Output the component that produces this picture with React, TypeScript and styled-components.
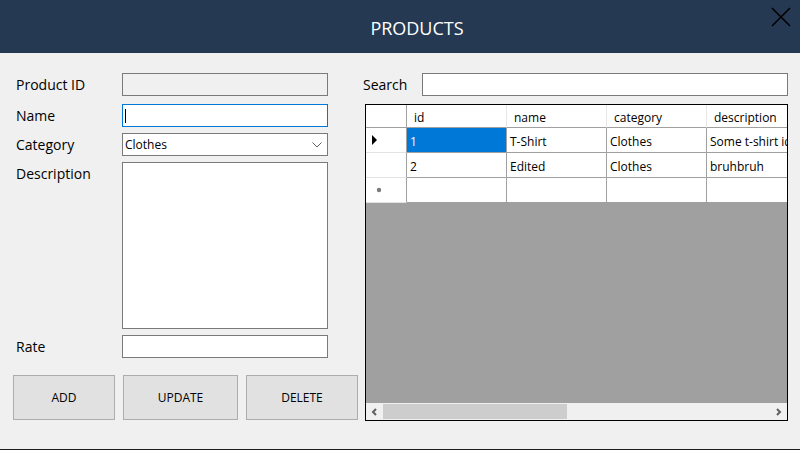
import React from 'react';
import styled, { createGlobalStyle } from 'styled-components';

const Global = createGlobalStyle`
  html, body { margin: 0; padding: 0; background: #f0f0f0; }
  body { font-family: "Open Sans", "Noto Sans", sans-serif; color: #000; }
  * { box-sizing: border-box; }
`;

const Window = styled.div`
  width: 800px;
  height: 450px;
  background: #f0f0f0;
  border-bottom: 1px solid #1c1c1c;
  display: flex;
  flex-direction: column;
  overflow: hidden;
`;

const TitleBar = styled.header`
  position: relative;
  flex: none;
  height: 53px;
  background: #253a52;
  display: flex;
  align-items: center;
  justify-content: center;
`;

const Title = styled.h1`
  margin: 0 0 0 34px;
  padding-top: 3px;
  font-size: 18px;
  font-weight: 400;
  color: #ffffff;
`;

const CloseButton = styled.button`
  position: absolute;
  top: 7px;
  right: 9px;
  width: 20px;
  height: 20px;
  padding: 0;
  border: none;
  background: transparent;
  display: flex;
`;

const Body = styled.main`
  flex: 1;
  display: flex;
  padding: 20px 12px 0 13px;
`;

const LeftPanel = styled.section`
  width: 345px;
  display: flex;
  flex-direction: column;
`;

const Form = styled.div`
  display: flex;
  flex-direction: column;
  padding-left: 3px;
`;

const FieldRow = styled.div<{ $mt: number }>`
  display: flex;
  align-items: flex-start;
  margin-top: ${p => p.$mt}px;
`;

const Label = styled.label<{ $w?: number }>`
  width: ${p => p.$w ?? 106}px;
  flex: none;
  height: 23px;
  line-height: 23px;
  font-size: 14px;
`;

const TextBox = styled.div<{ $h?: number; $w?: number; $disabled?: boolean; $focused?: boolean }>`
  width: ${p => p.$w ?? 206}px;
  height: ${p => p.$h ?? 23}px;
  border: 1px solid ${p => (p.$focused ? '#0078d7' : '#7a7a7a')};
  background: ${p => (p.$disabled ? '#f0f0f0' : '#ffffff')};
  display: flex;
  align-items: center;
  padding: 0 2px;
`;

const Caret = styled.span`
  display: block;
  width: 1px;
  height: 14px;
  background: #000;
`;

const Combo = styled.div`
  width: 206px;
  height: 23px;
  border: 1px solid #7a7a7a;
  background: #ffffff;
  display: flex;
  align-items: center;
  justify-content: space-between;
  padding: 0 5px 0 2px;
  font-size: 12px;
`;

const ButtonRow = styled.div`
  display: flex;
  gap: 8px;
  margin-top: 17px;
`;

const ActionButton = styled.button<{ $w: number }>`
  width: ${p => p.$w}px;
  height: 45px;
  background: #e1e1e1;
  border: 1px solid #adadad;
  font-family: "Open Sans", "Noto Sans", sans-serif;
  font-size: 12px;
  color: #000;
  padding: 0;
`;

const RightPanel = styled.section`
  width: 425px;
  margin-left: 5px;
  display: flex;
  flex-direction: column;
`;

const SearchRow = styled.div`
  display: flex;
  align-items: flex-start;
`;

const GridFrame = styled.div`
  margin: 8px 0 0 2px;
  width: 423px;
  height: 317px;
  border: 1px solid #000;
  background: #a0a0a0;
  display: flex;
  flex-direction: column;
  overflow: hidden;
`;

const GridTable = styled.div`
  display: grid;
  grid-template-columns: 41px 100px 100px 100px 120px;
  grid-template-rows: 23px 25px 25px 25px;
  background: #fff;
  width: 421px;
  overflow: hidden;
`;

const HeadCell = styled.div<{ $corner?: boolean }>`
  background: #fff;
  border-right: 1px solid ${p => (p.$corner ? '#a0a0a0' : '#e6e6e6')};
  border-bottom: 1px solid #a0a0a0;
  font-size: 12px;
  padding: 2px 0 0 7px;
  display: flex;
  align-items: center;
  white-space: nowrap;
`;

const RowHead = styled.div`
  background: #fff;
  border-right: 1px solid #a0a0a0;
  border-bottom: 1px solid #e3e3e3;
  display: flex;
  align-items: center;
  padding-left: 6px;
`;

const Cell = styled.div<{ $selected?: boolean }>`
  background: ${p => (p.$selected ? '#0078d7' : '#fff')};
  color: ${p => (p.$selected ? '#fff' : '#000')};
  border-right: 1px solid #a0a0a0;
  border-bottom: 1px solid #a0a0a0;
  font-size: 12px;
  padding: 2px 0 0 3px;
  display: flex;
  align-items: center;
  white-space: nowrap;
  overflow: hidden;
`;

const EmptyArea = styled.div`
  flex: 1;
  background: #a0a0a0;
`;

const HScroll = styled.div`
  flex: none;
  height: 17px;
  background: #f0f0f0;
  display: flex;
  align-items: center;
`;

const ScrollArrow = styled.div`
  width: 17px;
  height: 17px;
  display: flex;
  align-items: center;
  justify-content: center;
  flex: none;
`;

const ScrollTrack = styled.div`
  flex: 1;
  height: 15px;
  display: flex;
`;

const ScrollThumb = styled.div`
  width: 184px;
  height: 15px;
  background: #cdcdcd;
`;

const rows = [
  { id: '1', name: 'T-Shirt', category: 'Clothes', description: 'Some t-shirt idk' },
  { id: '2', name: 'Edited', category: 'Clothes', description: 'bruhbruh' },
];

export default function App() {
  return (
    <>
      <Global />
      <Window>
        <TitleBar>
          <Title>PRODUCTS</Title>
          <CloseButton aria-label="Close">
            <svg width="20" height="20" viewBox="0 0 20 20">
              <path d="M1 1 L19 19 M19 1 L1 19" stroke="#000" strokeWidth="1.6" fill="none" />
            </svg>
          </CloseButton>
        </TitleBar>
        <Body>
          <LeftPanel>
            <Form>
              <FieldRow $mt={0}>
                <Label>Product ID</Label>
                <TextBox $disabled />
              </FieldRow>
              <FieldRow $mt={8}>
                <Label>Name</Label>
                <TextBox $focused>
                  <Caret />
                </TextBox>
              </FieldRow>
              <FieldRow $mt={6}>
                <Label>Category</Label>
                <Combo>
                  <span>Clothes</span>
                  <svg width="10" height="6" viewBox="0 0 10 6">
                    <path d="M0.5 0.5 L5 5 L9.5 0.5" stroke="#606060" strokeWidth="1" fill="none" />
                  </svg>
                </Combo>
              </FieldRow>
              <FieldRow $mt={6}>
                <Label>Description</Label>
                <TextBox $h={167} />
              </FieldRow>
              <FieldRow $mt={6}>
                <Label>Rate</Label>
                <TextBox />
              </FieldRow>
            </Form>
            <ButtonRow>
              <ActionButton $w={102}>ADD</ActionButton>
              <ActionButton $w={115}>UPDATE</ActionButton>
              <ActionButton $w={112}>DELETE</ActionButton>
            </ButtonRow>
          </LeftPanel>
          <RightPanel>
            <SearchRow>
              <Label $w={59}>Search</Label>
              <TextBox $w={366} />
            </SearchRow>
            <GridFrame>
              <GridTable>
                <HeadCell $corner />
                <HeadCell>id</HeadCell>
                <HeadCell>name</HeadCell>
                <HeadCell>category</HeadCell>
                <HeadCell>description</HeadCell>
                {rows.map((r, i) => (
                  <React.Fragment key={r.id}>
                    <RowHead>
                      {i === 0 && (
                        <svg width="6" height="10" viewBox="0 0 6 10">
                          <path d="M0 0 L5 5 L0 10 Z" fill="#000" />
                        </svg>
                      )}
                    </RowHead>
                    <Cell $selected={i === 0}>{r.id}</Cell>
                    <Cell>{r.name}</Cell>
                    <Cell>{r.category}</Cell>
                    <Cell>{r.description}</Cell>
                  </React.Fragment>
                ))}
                <RowHead>
                  <svg width="8" height="8" viewBox="0 0 8 8" style={{ marginLeft: 3 }}>
                    <circle cx="4" cy="4" r="2.2" fill="#7a7a7a" />
                  </svg>
                </RowHead>
                <Cell />
                <Cell />
                <Cell />
                <Cell />
              </GridTable>
              <EmptyArea />
              <HScroll>
                <ScrollArrow>
                  <svg width="7" height="8" viewBox="0 0 7 8">
                    <path d="M5 1 L2 4 L5 7" stroke="#606060" strokeWidth="2" fill="none" />
                  </svg>
                </ScrollArrow>
                <ScrollTrack>
                  <ScrollThumb />
                </ScrollTrack>
                <ScrollArrow>
                  <svg width="7" height="8" viewBox="0 0 7 8">
                    <path d="M2 1 L5 4 L2 7" stroke="#606060" strokeWidth="2" fill="none" />
                  </svg>
                </ScrollArrow>
              </HScroll>
            </GridFrame>
          </RightPanel>
        </Body>
      </Window>
    </>
  );
}
